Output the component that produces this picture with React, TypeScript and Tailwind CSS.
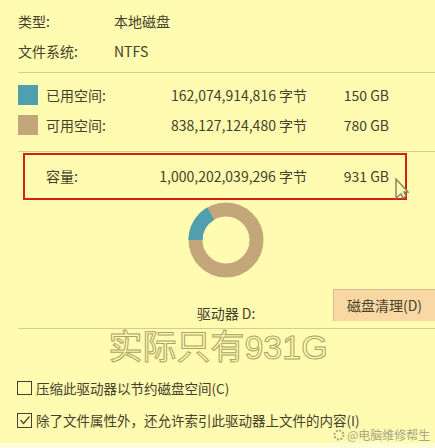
import React from 'react';

const font = "font-['Noto_Sans_CJK_SC','Noto_Sans',sans-serif]";

const SpaceRow = ({ swatch, label, bytes, size }: { swatch: string; label: string; bytes: string; size: string }) => (
  <div className="flex items-center h-[30px] text-[14px]">
    <div className={`w-[20px] h-[20px] shrink-0 ${swatch}`}></div>
    <div className="ml-[8px] w-[125px]">{label}</div>
    <div className="w-[136px] text-right whitespace-nowrap">{bytes}</div>
    <div className="w-[82px] text-right whitespace-nowrap">{size}</div>
  </div>
);

const Donut = () => (
  <svg width="76" height="76" viewBox="0 0 76 76" className="block">
    <circle cx="38" cy="38" r="30.5" fill="none" stroke="#c3a77a" strokeWidth="14" />
    <path d="M7.5 38 A30.5 30.5 0 0 1 22.75 11.6" fill="none" stroke="#4f9fae" strokeWidth="14" />
  </svg>
);

const App: React.FC = () => {
  return (
    <div className={`relative w-[435px] h-[448px] overflow-hidden bg-[#fffbb0] text-[#45412a] ${font}`}>
      <div className="pl-[18px] pt-[8px]">
        <div className="flex items-center h-[26px] text-[14px]">
          <span className="w-[96px]">类型:</span>
          <span>本地磁盘</span>
        </div>
        <div className="flex items-center h-[34px] text-[14px]">
          <span className="w-[96px]">文件系统:</span>
          <span>NTFS</span>
        </div>
        <div className="h-px bg-[#d6cb8f] mt-[4px] mb-[7px]"></div>
        <SpaceRow swatch="bg-[#4f9fae]" label="已用空间:" bytes="162,074,914,816 字节" size="150 GB" />
        <SpaceRow swatch="bg-[#c3a77a]" label="可用空间:" bytes="838,127,124,480 字节" size="780 GB" />
        <div className="h-px bg-[#d6cb8f] mt-[11px]"></div>
      </div>

      <div className="ml-[23px] mt-[1px] w-[384px] h-[47px] border-[2px] border-[#d81e18] flex items-center text-[14px]">
        <span className="ml-[21px] w-[70px]">容量:</span>
        <span className="w-[191px] text-right whitespace-nowrap">1,000,202,039,296 字节</span>
        <span className="w-[82px] text-right whitespace-nowrap">931 GB</span>
      </div>

      <div className="flex justify-center mt-[2px] pl-[17px]">
        <Donut />
      </div>

      <div className="flex justify-center mt-[25px] pl-[17px] text-[14px] h-[20px] items-center">驱动器 D:</div>
      <div className="ml-[18px] h-px bg-[#d6cb8f] mt-[5px]"></div>

      <div className="flex justify-center pl-[1px] text-[34px] leading-[36px] h-[36px] text-[#fffbb0] font-['Liberation_Sans','Noto_Sans_CJK_SC',sans-serif] [-webkit-text-stroke:1px_#a9a266]">
        实际只有931G
      </div>

      <div className="pl-[17px] mt-[12px] flex items-center gap-[4px] h-[22px] text-[13.5px]">
        <div className="w-[15px] h-[14px] border border-[#45412a]"></div>
        <span>压缩此驱动器以节约磁盘空间(C)</span>
      </div>
      <div className="pl-[17px] mt-[10px] flex items-center gap-[4px] h-[22px] text-[13.5px]">
        <div className="w-[15px] h-[15px] border border-[#45412a] flex items-center justify-center">
          <svg width="12" height="12" viewBox="0 0 12 12">
            <path d="M1.5 6 L4.5 9.5 L10.5 2.5" fill="none" stroke="#45412a" strokeWidth="1.2" />
          </svg>
        </div>
        <span className="whitespace-nowrap leading-[16px]">除了文件属性外，还允许索引此驱动器上文件的内容(I)</span>
      </div>

      {/* button runs off the right edge */}
      <div className="absolute left-[333px] top-[289px] w-[102px] h-[32px] bg-[#f9d8a3] border-l border-t border-[#d9bb8a] flex items-center justify-center text-[14px]">
        磁盘清理(D)
      </div>

      {/* mouse cursor on top of the red box */}
      <svg className="absolute left-[394px] top-[178px]" width="16" height="22" viewBox="0 0 16 22">
        <path d="M2 1 L2 20 L7 16 L9 20 L12 18 L10 14 L14 14 Z" fill="#fffbb0" stroke="#8a8666" strokeWidth="1.5" />
      </svg>

      {/* watermark */}
      <div className="absolute left-[333px] top-[428px] flex items-center gap-[2px] text-[12px] leading-[14px] text-[#a8a487] whitespace-nowrap">
        <svg width="12" height="12" viewBox="0 0 12 12">
          <circle cx="6" cy="6" r="4.5" fill="none" stroke="#a8a487" strokeWidth="2" strokeDasharray="2 1.5" />
        </svg>
        <span>@电脑维修帮生</span>
      </div>
      <div className="absolute left-0 bottom-0 w-full h-[5px] bg-[#fffdd8]"></div>
    </div>
  );
};

export default App;
